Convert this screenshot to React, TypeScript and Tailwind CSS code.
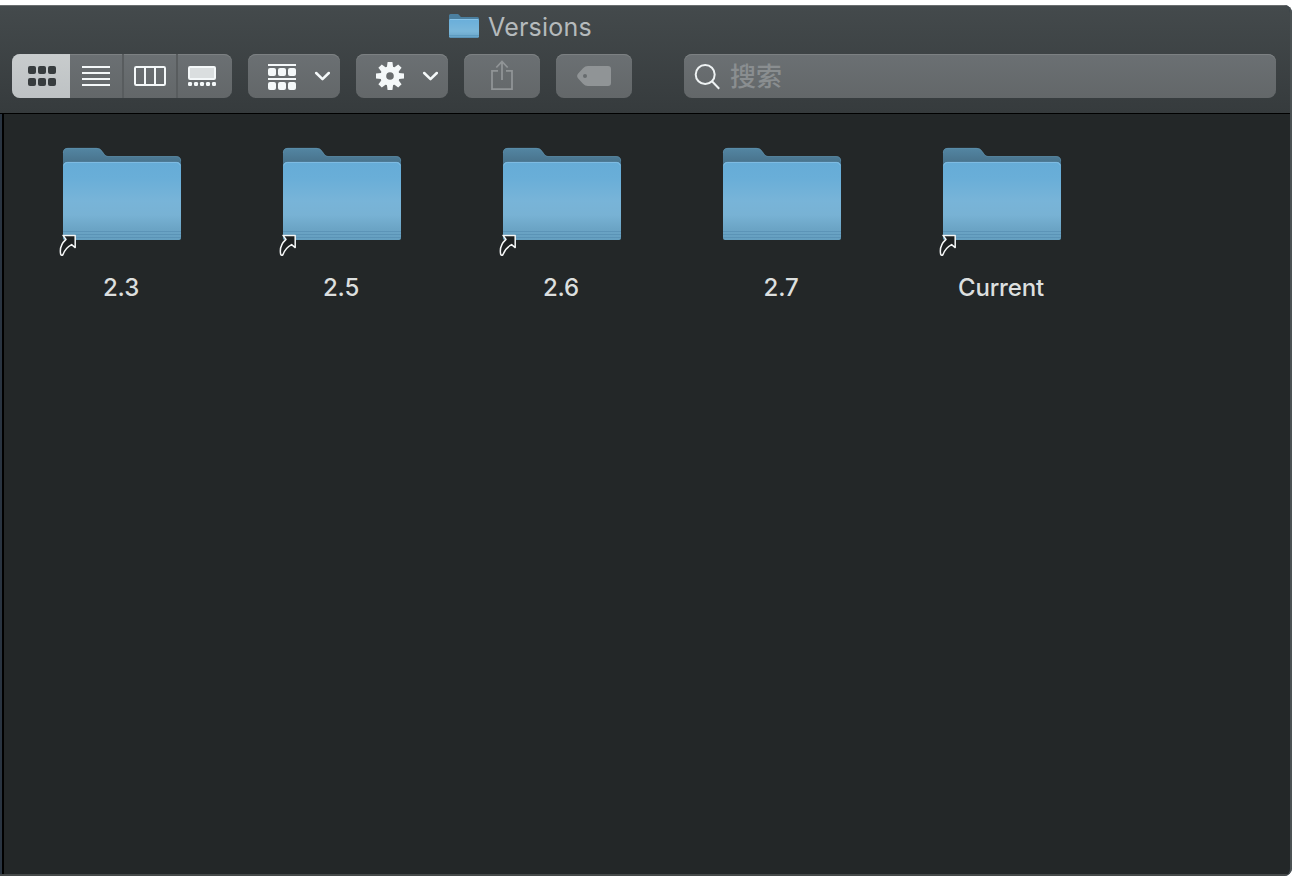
import React from "react";

const BUTTON =
  "flex h-11 items-center rounded-lg bg-gradient-to-b from-[#6b7073] to-[#636769] shadow-[inset_0_1px_0_#7c8082]";

const ITEMS = [
  { name: "2.3", alias: true },
  { name: "2.5", alias: true },
  { name: "2.6", alias: true },
  { name: "2.7", alias: false },
  { name: "Current", alias: true },
];

function Folder() {
  return (
    <svg width="120" height="96" viewBox="0 0 120 96" className="block">
      <defs>
        <linearGradient id="back" x1="0" y1="0" x2="0" y2="16" gradientUnits="userSpaceOnUse">
          <stop offset="0" stopColor="#5487a4" />
          <stop offset="1" stopColor="#48728b" />
        </linearGradient>
        <linearGradient id="front" x1="0" y1="0" x2="0" y2="1">
          <stop offset="0" stopColor="#66acd7" />
          <stop offset="0.2" stopColor="#69aed8" />
          <stop offset="0.5" stopColor="#78b4d8" />
          <stop offset="0.68" stopColor="#78b2d4" />
          <stop offset="0.86" stopColor="#6ba4c5" />
          <stop offset="1" stopColor="#659fc0" />
        </linearGradient>
      </defs>
      <path d="M1 20V6Q1 1 6 1H34.5Q38 1 40.2 4.2L42.5 7.5Q43.8 9.2 46 9.2H114Q119 9.2 119 14.2V24H1Z" fill="url(#back)" />
      <path d="M1.3 6Q1.3 1.3 6 1.3H34.5Q38 1.3 40.2 4.5L42.5 7.8Q43.8 9.5 46 9.5H114Q118.7 9.5 118.7 14.2" fill="none" stroke="#5f92ae" strokeWidth=".6" />
      <path d="M1 19.5Q1 15 5.5 15H114.5Q119 15 119 19.5V91Q119 93 117 93H3Q1 93 1 91Z" fill="url(#front)" />
      <path d="M1.6 18.5Q2.3 15.4 5.5 15.4H114.5Q117.7 15.4 118.4 18.5" fill="none" stroke="#84c0e4" strokeWidth=".9" />
      <path d="M1 84.5H119M1 87.5H119M1 90.5H119" stroke="#548baf" strokeWidth="1" opacity=".6" />
    </svg>
  );
}

function SmallFolder() {
  return (
    <svg width="30" height="24" viewBox="0 0 30 24">
      <defs>
        <linearGradient id="mini" x1="0" y1="0" x2="0" y2="1">
          <stop offset="0" stopColor="#69aeda" />
          <stop offset=".65" stopColor="#7ab7da" />
          <stop offset="1" stopColor="#68a4c8" />
        </linearGradient>
      </defs>
      <path d="M0 8V1.5Q0 0 1.5 0H8.5Q9.5 0 10.2 1L11.2 2.3Q11.6 3 12.4 3H28.5Q30 3 30 4.5V8Z" fill="#4b7f9f" />
      <path d="M0 6Q0 5 1 5H29Q30 5 30 6V22.5Q30 23.8 28.7 23.8H1.3Q0 23.8 0 22.5Z" fill="url(#mini)" />
      <path d="M1 5.5H29" stroke="#86c3e8" />
      <path d="M0 21.5H30M1 23.4H29" stroke="#5796bd" strokeWidth=".7" />
    </svg>
  );
}

function AliasArrow() {
  return (
    <svg width="20" height="24" viewBox="0 0 20 24" className="absolute -left-1 top-[86px]">
      <path
        d="M5 2.4H17.2V14.6L13.6 11.6C9 14 6.6 17 5 21.6Q3.6 23 2.7 21.4C1.6 16.2 3.6 10.4 8 6.4Z"
        fill="#1d2021"
        stroke="#f5f7f7"
        strokeWidth="1.5"
        strokeLinejoin="round"
      />
    </svg>
  );
}

function Chevron() {
  return (
    <svg width="16" height="10" viewBox="0 0 16 10" fill="none">
      <path d="M2.2 2 8.5 8.2 14.8 2" stroke="#f4f8f9" strokeWidth="2.5" strokeLinecap="round" strokeLinejoin="round" />
    </svg>
  );
}

function Squares({ y, fill }: { y: number; fill: string }) {
  return (
    <g fill={fill}>
      <rect x="0" y={y} width="8" height="8" rx="2" />
      <rect x="10" y={y} width="8" height="8" rx="2" />
      <rect x="20" y={y} width="8" height="8" rx="2" />
    </g>
  );
}

function Gear() {
  return (
    <svg width="28" height="28" viewBox="-14 -14 28 28">
      <g fill="#f4f8f9">
        {[0, 45, 90, 135].map((angle) => (
          <path key={angle} d="M-3.1 -9 -2.4 -14H2.4L3.1 -9V9L2.4 14H-2.4L-3.1 9Z" transform={`rotate(${angle})`} />
        ))}
        <circle r="9.7" />
      </g>
      <circle r="3.8" fill="#686c6e" />
    </svg>
  );
}

function ViewSwitcher() {
  return (
    <div className={`${BUTTON} w-[220px] overflow-hidden`}>
      <div className="flex h-full w-[58px] items-center justify-center bg-gradient-to-b from-[#c8cccd] to-[#bec2c4] pl-0.5">
        <svg width="28" height="20" viewBox="0 0 28 20">
          <Squares y={0} fill="#373c3e" />
          <Squares y={12} fill="#373c3e" />
        </svg>
      </div>
      <div className="flex h-full w-[54px] items-center border-r-2 border-[#585c5e] pl-3">
        <svg width="28" height="20" viewBox="0 0 28 20">
          <path d="M0 1H28M0 7H28M0 13H28M0 19H28" stroke="#f4f8f9" strokeWidth="2" />
        </svg>
      </div>
      <div className="flex h-full w-[54px] items-center border-r-2 border-[#585c5e] pl-2.5">
        <svg width="32" height="20" viewBox="0 0 32 20" fill="none" stroke="#f4f8f9" strokeWidth="2">
          <rect x="1" y="1" width="30" height="18" rx="1.2" />
          <path d="M11 1V19M21 1V19" />
        </svg>
      </div>
      <div className="flex h-full w-[54px] items-center pl-2.5">
        <svg width="28" height="20" viewBox="0 0 28 20" fill="#f4f8f9">
          <rect x="1" y="1" width="26" height="12" rx="1" fill="#dadedf" stroke="#f4f8f9" strokeWidth="2" />
          {[0, 6, 12, 18, 24].map((x) => (
            <rect key={x} x={x} y="16" width="4" height="4" rx="1.2" />
          ))}
        </svg>
      </div>
    </div>
  );
}

export default function App() {
  return (
    <div className="h-[876px] w-[1294px] overflow-hidden bg-white pt-[5px] font-['Inter','Noto_Sans_CJK_SC',sans-serif]">
      <div className="h-[871px] w-[1292px] rounded-r-lg bg-[#293441]">
        <div className="flex h-full flex-col overflow-hidden rounded-r-lg border-r-2 border-[#4b5153]">
          <header className="h-[109px] shrink-0 border-b border-black bg-gradient-to-b from-[#444a4c] to-[#363b3d] shadow-[inset_0_1px_0_#6a6e6f]">
            <div className="flex h-[49px] items-start pl-[449px] pt-[9px]">
              <SmallFolder />
              <h1 className="ml-[9px] -mt-[3px] whitespace-nowrap text-[25px] leading-8 tracking-[0.2px] text-[#b5babc]">Versions</h1>
            </div>
            <div className="flex pl-3">
              <ViewSwitcher />
              <button className={`${BUTTON} ml-4 w-[92px] pl-5`}>
                <svg width="28" height="28" viewBox="0 0 28 28">
                  <path d="M0 3H28M0 17H28" stroke="#f4f8f9" strokeWidth="2" />
                  <Squares y={6} fill="#f4f8f9" />
                  <Squares y={20} fill="#f4f8f9" />
                </svg>
                <span className="ml-[18px]"><Chevron /></span>
              </button>
              <button className={`${BUTTON} ml-4 w-[92px] pl-5`}>
                <Gear />
                <span className="ml-[18px]"><Chevron /></span>
              </button>
              <button className={`${BUTTON} ml-4 w-[76px] justify-center`}>
                <svg width="24" height="32" viewBox="0 0 24 32" fill="none" stroke="#909496" strokeWidth="1.8">
                  <path d="M8 10.9H2V29.1H22V10.9H16M12 20V1.5M6.3 7.5 12 1.5 17.7 7.5" />
                </svg>
              </button>
              <button className={`${BUTTON} ml-4 w-[76px] justify-center`}>
                <svg width="34" height="20" viewBox="0 0 34 20">
                  <path fillRule="evenodd" d="M11 0H31Q34 0 34 3V17Q34 20 31 20H11Q8 20 6 17.8L1.2 12.4Q-1 10 1.2 7.6L6 2.2Q8 0 11 0ZM8 8A2 2 0 1 0 8 12A2 2 0 1 0 8 8Z" fill="#909496" />
                </svg>
              </button>
              <div className={`${BUTTON} ml-[52px] w-[592px] pl-2.5`}>
                <svg width="27" height="28" viewBox="0 0 27 28" fill="none" stroke="#eef2f3" strokeWidth="2" className="mt-0.5">
                  <circle cx="11.2" cy="11.5" r="9.5" />
                  <path d="M18 18.3 25.2 25.7" />
                </svg>
                <span className="ml-[9px] mt-0.5 text-[26px] font-medium leading-8 text-[#8a8e90]">搜索</span>
              </div>
            </div>
          </header>
          <main className="flex grow border-b-2 border-b-[#454949]">
            <div className="w-1 shrink-0 border-r-2 border-black bg-[#293441]" />
            <div className="flex grow bg-[#232728] pl-2 pt-[33px]">
              {ITEMS.map((item) => (
                <div key={item.name} className="flex w-[220px] flex-col items-center">
                  <div className="relative">
                    <Folder />
                    {item.alias && <AliasArrow />}
                  </div>
                  <span className="-ml-0.5 mt-[29px] text-[24px] font-medium leading-8 tracking-[-0.15px] text-[#dcdfdf]">{item.name}</span>
                </div>
              ))}
            </div>
          </main>
        </div>
      </div>
    </div>
  );
}
